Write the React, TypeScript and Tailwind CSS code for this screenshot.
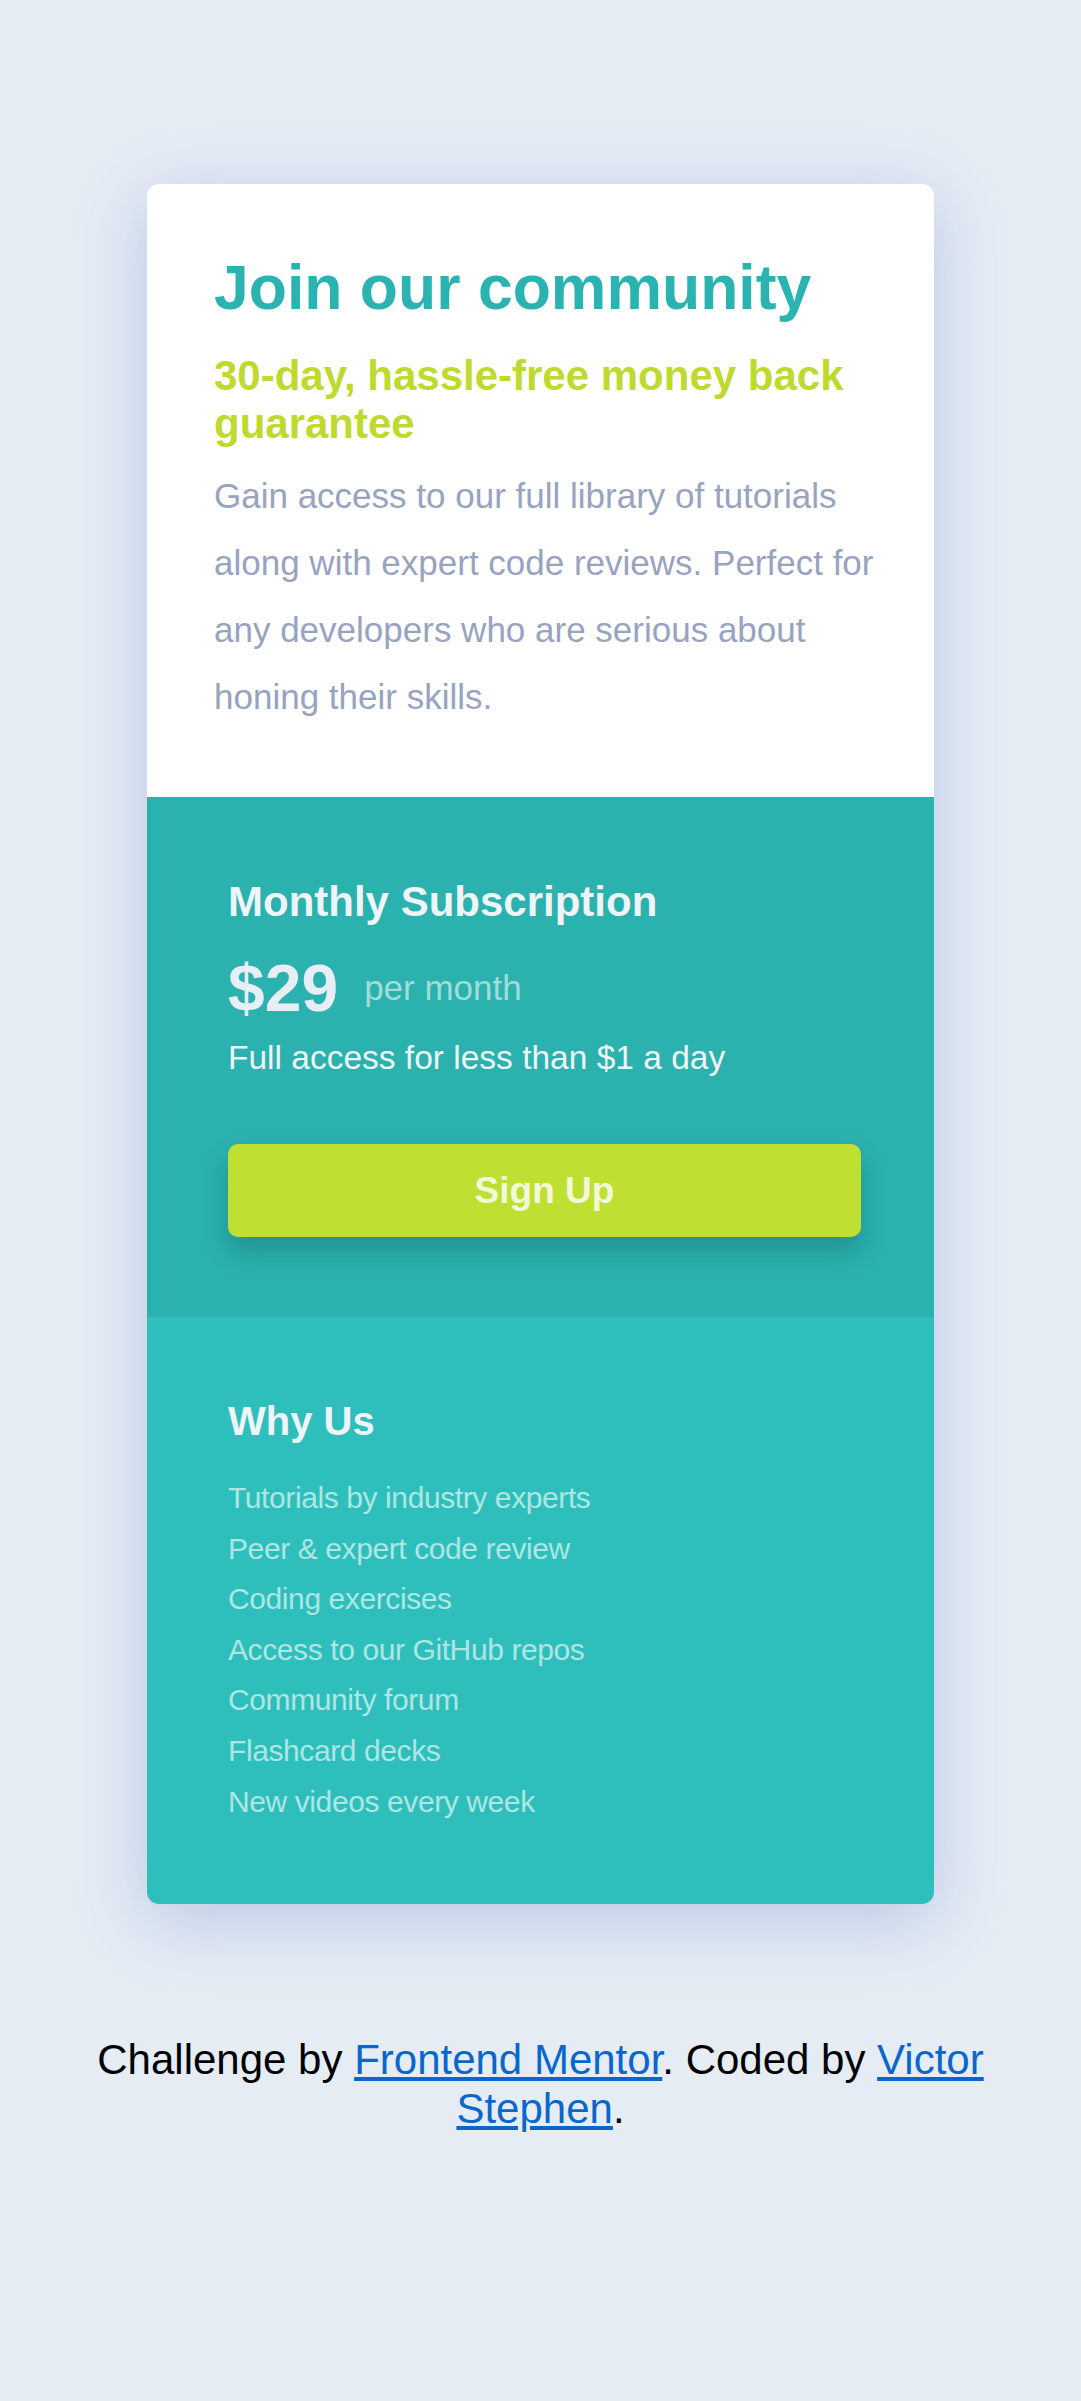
import React from "react";

const features = [
  "Tutorials by industry experts",
  "Peer & expert code review",
  "Coding exercises",
  "Access to our GitHub repos",
  "Community forum",
  "Flashcard decks",
  "New videos every week",
];

export default function App() {
  return (
    <div
      className="min-h-[2401px] w-full bg-[#e5ecf4] flex flex-col items-center pt-[184px]"
      style={{ fontFamily: '"Liberation Sans", Arial, sans-serif' }}
    >
      <div className="w-[787px] rounded-[12px] overflow-hidden shadow-[0_16px_70px_rgba(70,95,190,0.26)]">
        <section className="bg-white pl-[67px] pr-[60px] pt-[68px] pb-[67px]">
          <h1 className="text-[62.5px] leading-[70px] font-bold text-[#2bb3b1]">Join our community</h1>
          <h2 className="mt-[30px] text-[42px] leading-[48px] font-bold text-[#bfd92f]">
            30-day, hassle-free money back guarantee
          </h2>
          <p className="mt-[14px] text-[35px] leading-[67px] text-[#98a3bf]">
            Gain access to our full library of tutorials along with expert code reviews. Perfect for any developers who are serious about honing their skills.
          </p>
        </section>
        <section className="bg-[#2bb1ae] pl-[81px] pr-[73px] pt-[80px] pb-[80px]">
          <h3 className="text-[42px] leading-[50px] font-bold text-[#eef4f8]">Monthly Subscription</h3>
          <div className="mt-[26px] flex items-center gap-[26px]">
            <span className="text-[66px] leading-[70px] font-bold text-[#e8eef5]">$29</span>
            <span className="text-[35px] leading-[40px] text-[#a0ddd9]">per month</span>
          </div>
          <p className="mt-[15px] text-[33.5px] leading-[40px] text-[#eef5f6]">Full access for less than $1 a day</p>
          <button className="mt-[66px] w-full h-[93px] rounded-[10px] bg-[#bfdf33] flex items-center justify-center shadow-[0_14px_24px_rgba(20,90,90,0.35)]">
            <span className="text-[37px] leading-[40px] font-bold text-[#f2f8d8]">Sign Up</span>
          </button>
        </section>
        <section className="bg-[#2ebfbc] pl-[81px] pr-[73px] pt-[80px] pb-[77px]">
          <h3 className="text-[40px] leading-[48px] font-bold text-[#eef4f8]">Why Us</h3>
          <ul className="mt-[28px]">
            {features.map((f) => (
              <li key={f} className="text-[30px] leading-[50.6px] tracking-[-0.4px] text-[#aee6e3]">
                {f}
              </li>
            ))}
          </ul>
        </section>
      </div>
      <footer className="mt-[131px] w-[920px] text-center text-[42px] leading-[49px] text-black">
        Challenge by{" "}
        <a href="#" className="text-[#0b66cc] underline">
          Frontend Mentor
        </a>
        . Coded by{" "}
        <a href="#" className="text-[#0b66cc] underline">
          Victor Stephen
        </a>
        .
      </footer>
    </div>
  );
}
